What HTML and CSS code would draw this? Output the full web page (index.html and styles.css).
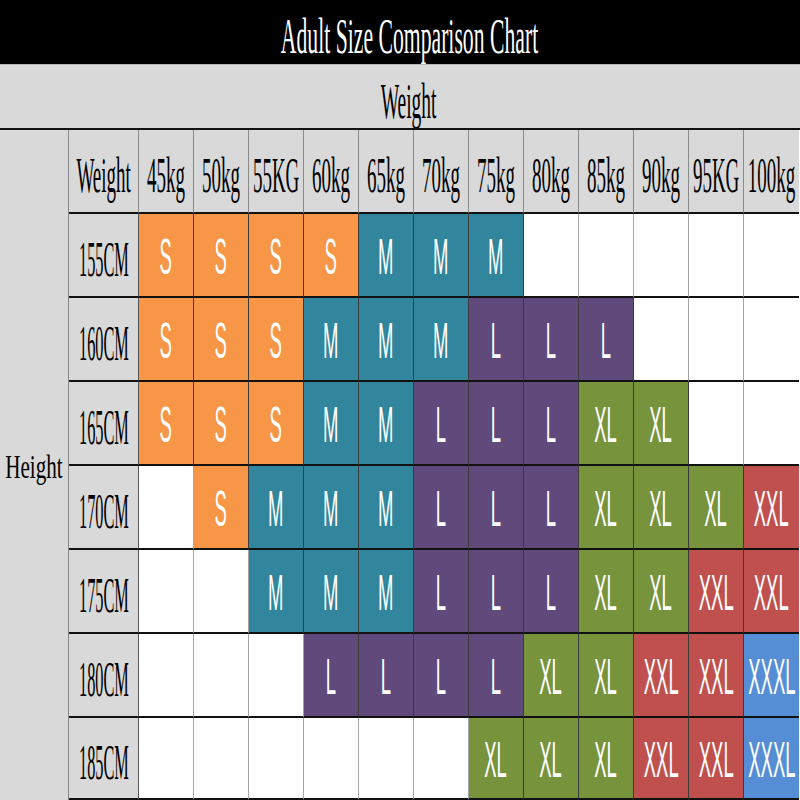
FILE: index.html
```html
<!DOCTYPE html>
<html>
<head>
<meta charset="utf-8">
<link rel="stylesheet" href="styles.css">
</head>
<body>
<div class="chart">
  <div class="title"><span class="tt">Adult Size Comparison Chart</span></div>
  <div class="weight-row"><span class="wt">Weight</span></div>
  <div class="grid">
    <div class="height-cell"><span class="ht">Height</span></div>

    <div class="hd"><span class="ch">Weight</span></div>
    <div class="hd"><span class="ch">45kg</span></div>
    <div class="hd"><span class="ch">50kg</span></div>
    <div class="hd"><span class="ch">55KG</span></div>
    <div class="hd"><span class="ch">60kg</span></div>
    <div class="hd"><span class="ch">65kg</span></div>
    <div class="hd"><span class="ch">70kg</span></div>
    <div class="hd"><span class="ch">75kg</span></div>
    <div class="hd"><span class="ch">80kg</span></div>
    <div class="hd"><span class="ch">85kg</span></div>
    <div class="hd"><span class="ch">90kg</span></div>
    <div class="hd"><span class="ch">95KG</span></div>
    <div class="hd last"><span class="ch">100kg</span></div>

    <div class="rh"><span class="rt">155CM</span></div>
    <div class="c s"><span>S</span></div><div class="c s"><span>S</span></div><div class="c s"><span>S</span></div><div class="c s"><span>S</span></div>
    <div class="c m"><span>M</span></div><div class="c m"><span>M</span></div><div class="c m"><span>M</span></div>
    <div class="c e"></div><div class="c e"></div><div class="c e"></div><div class="c e"></div><div class="c e last"></div>

    <div class="rh"><span class="rt">160CM</span></div>
    <div class="c s"><span>S</span></div><div class="c s"><span>S</span></div><div class="c s"><span>S</span></div>
    <div class="c m"><span>M</span></div><div class="c m"><span>M</span></div><div class="c m"><span>M</span></div>
    <div class="c l"><span>L</span></div><div class="c l"><span>L</span></div><div class="c l"><span>L</span></div>
    <div class="c e"></div><div class="c e"></div><div class="c e last"></div>

    <div class="rh"><span class="rt">165CM</span></div>
    <div class="c s"><span>S</span></div><div class="c s"><span>S</span></div><div class="c s"><span>S</span></div>
    <div class="c m"><span>M</span></div><div class="c m"><span>M</span></div>
    <div class="c l"><span>L</span></div><div class="c l"><span>L</span></div><div class="c l"><span>L</span></div>
    <div class="c xl"><span>XL</span></div><div class="c xl"><span>XL</span></div>
    <div class="c e"></div><div class="c e last"></div>

    <div class="rh"><span class="rt">170CM</span></div>
    <div class="c e"></div>
    <div class="c s"><span>S</span></div>
    <div class="c m"><span>M</span></div><div class="c m"><span>M</span></div><div class="c m"><span>M</span></div>
    <div class="c l"><span>L</span></div><div class="c l"><span>L</span></div><div class="c l"><span>L</span></div>
    <div class="c xl"><span>XL</span></div><div class="c xl"><span>XL</span></div><div class="c xl"><span>XL</span></div>
    <div class="c xxl last"><span>XXL</span></div>

    <div class="rh"><span class="rt">175CM</span></div>
    <div class="c e"></div><div class="c e"></div>
    <div class="c m"><span>M</span></div><div class="c m"><span>M</span></div><div class="c m"><span>M</span></div>
    <div class="c l"><span>L</span></div><div class="c l"><span>L</span></div><div class="c l"><span>L</span></div>
    <div class="c xl"><span>XL</span></div><div class="c xl"><span>XL</span></div>
    <div class="c xxl"><span>XXL</span></div><div class="c xxl last"><span>XXL</span></div>

    <div class="rh"><span class="rt">180CM</span></div>
    <div class="c e"></div><div class="c e"></div><div class="c e"></div>
    <div class="c l"><span>L</span></div><div class="c l"><span>L</span></div><div class="c l"><span>L</span></div><div class="c l"><span>L</span></div>
    <div class="c xl"><span>XL</span></div><div class="c xl"><span>XL</span></div>
    <div class="c xxl"><span>XXL</span></div><div class="c xxl"><span>XXL</span></div>
    <div class="c xxxl last"><span>XXXL</span></div>

    <div class="rh"><span class="rt">185CM</span></div>
    <div class="c e"></div><div class="c e"></div><div class="c e"></div><div class="c e"></div><div class="c e"></div><div class="c e"></div>
    <div class="c xl"><span>XL</span></div><div class="c xl"><span>XL</span></div><div class="c xl"><span>XL</span></div>
    <div class="c xxl"><span>XXL</span></div><div class="c xxl"><span>XXL</span></div>
    <div class="c xxxl last"><span>XXXL</span></div>
  </div>
</div>
</body>
</html>
```

FILE: styles.css
```css
html, body {
  margin: 0;
  padding: 0;
  width: 800px;
  height: 800px;
  overflow: hidden;
  background: #fff;
}

.chart {
  width: 800px;
  height: 800px;
  overflow: hidden;
  font-family: "Liberation Serif", "Times New Roman", serif;
}

.title {
  box-sizing: border-box;
  height: 65px;
  background: #000;
  border-bottom: 1px solid #b5b5b5;
  display: flex;
  align-items: center;
  justify-content: center;
  padding-left: 18px;
  overflow: hidden;
}

.tt {
  display: inline-block;
  color: #fff;
  font-size: 50px;
  line-height: 1;
  white-space: nowrap;
  transform: scaleX(0.434);
  margin-top: 7px;
}

.weight-row {
  box-sizing: border-box;
  height: 65px;
  background: #d9d9d9;
  border-bottom: 2px solid #111;
  display: flex;
  align-items: center;
  justify-content: center;
  padding-left: 18px;
  overflow: hidden;
}

.wt {
  display: inline-block;
  color: #000;
  font-size: 50px;
  line-height: 1;
  transform: scaleX(0.39);
  margin-top: 9px;
}

.grid {
  display: grid;
  grid-template-columns: 69px 70px repeat(12, 55px);
  grid-template-rows: 84px repeat(5, 84px) 84px 82px;
}

.grid > div {
  box-sizing: border-box;
  display: flex;
  align-items: center;
  justify-content: center;
  overflow: hidden;
  border-bottom: 2px solid #111;
  border-right: 1px solid #555;
}

.grid > .height-cell {
  grid-row: 1 / span 8;
  background: #d9d9d9;
  border-bottom: none;
  border-right: 1px solid #8a8a8a;
  padding-top: 4px;
}

.ht {
  display: inline-block;
  font-size: 33px;
  line-height: 1;
  transform: scaleX(0.64);
}

.hd {
  background: #d9d9d9;
}

.grid > .hd {
  border-right: 1px solid #8a8a8a;
}

.ch {
  display: inline-block;
  font-size: 50px;
  line-height: 1;
  white-space: nowrap;
  transform: scaleX(0.38);
  margin-top: 8px;
}

.rh {
  background: #d9d9d9;
}

.rt {
  display: inline-block;
  font-size: 51px;
  line-height: 1;
  white-space: nowrap;
  transform: scaleX(0.32);
  margin-top: 8px;
}

.c span {
  display: inline-block;
  color: #fff;
  font-family: "Liberation Sans", Arial, sans-serif;
  font-size: 50px;
  line-height: 1;
  white-space: nowrap;
  transform: scaleX(0.37);
  margin-top: 4px;
}

.grid > .c {
  border-right: 1px solid #3a3a3a;
}

.grid > .e {
  background: #fff;
  border-right: 1px solid #a6a6a6;
}

.grid > .last {
  border-right: none;
}

.s { background: #f79646; }
.m { background: #31859c; }
.l { background: #604a7b; }
.xl { background: #77933c; }
.xxl { background: #c0504d; }
.xxxl { background: #558ed5; }
```
